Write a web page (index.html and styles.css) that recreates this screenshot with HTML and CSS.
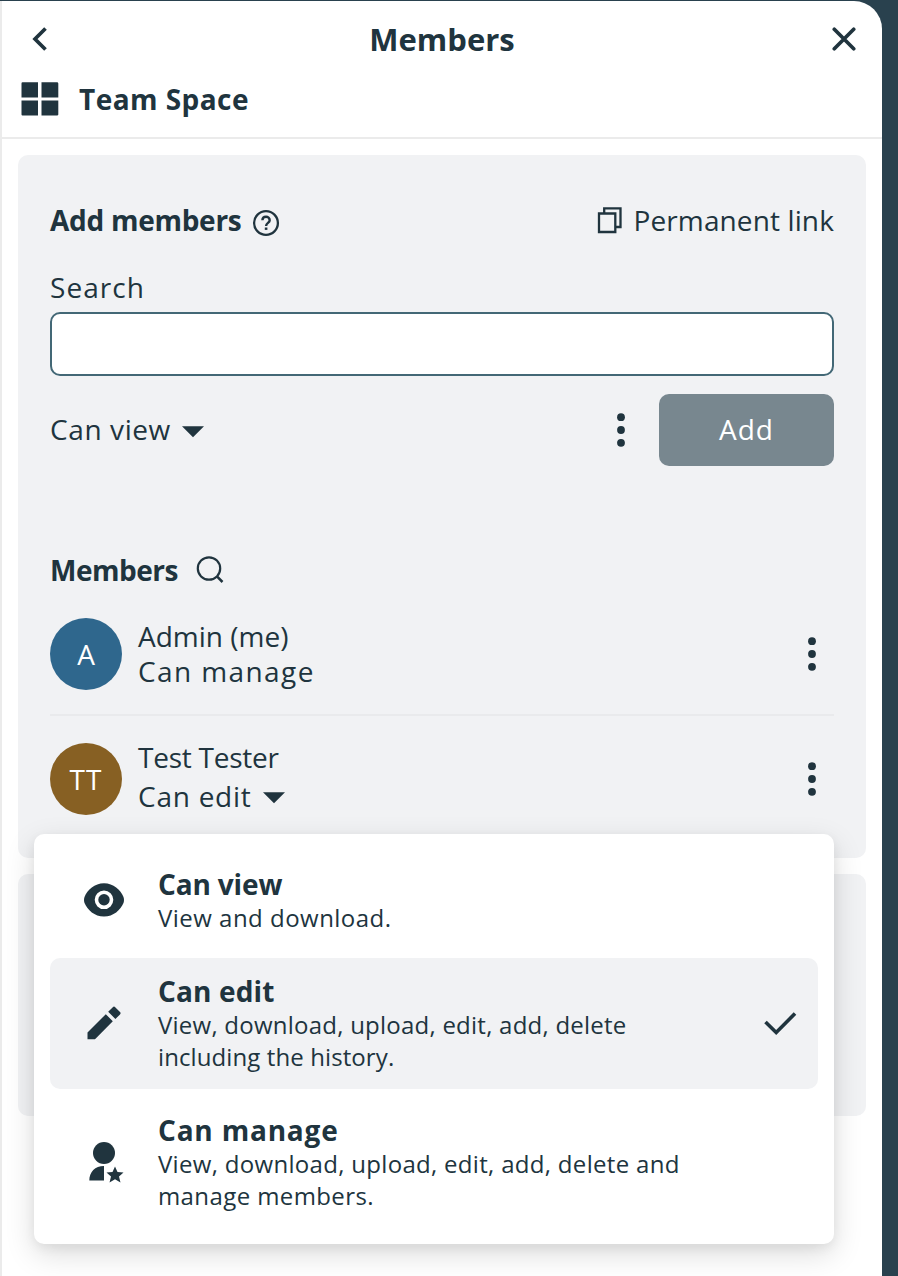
FILE: index.html
```html
<!DOCTYPE html>
<html lang="en">
<head>
<meta charset="utf-8">
<title>Members</title>
<link rel="stylesheet" href="styles.css">
</head>
<body>
<svg class="sprite" aria-hidden="true">
  <symbol id="dots" viewBox="0 0 8 34"><circle cx="4" cy="4.2" r="3.9"/><circle cx="4" cy="17" r="3.9"/><circle cx="4" cy="29.8" r="3.9"/></symbol>
  <symbol id="caret" viewBox="0 0 22 12"><path d="M0 0.3H22L11 11.3Z"/></symbol>
</svg>
<main class="sidebar">
  <header class="top">
    <div class="titlebar">
      <button class="icon-btn"><svg width="18" height="26" viewBox="0 0 18 26"><path d="M14.500 2.500L4 13l10.500 10.500" fill="none" stroke="currentColor" stroke-width="3.700"/></svg></button>
      <h1 class="title">Members</h1>
      <button class="icon-btn"><svg width="24" height="24" viewBox="0 0 24 24"><path d="M2.300 2.300L21.700 21.700M21.700 2.300L2.300 21.700" fill="none" stroke="currentColor" stroke-width="3.700" stroke-linecap="round"/></svg></button>
    </div>
    <div class="resource">
      <svg width="38" height="34" viewBox="0 0 38 34"><path d="M1.500 .3H17V15.500H.5V1.500Q.5 .3 1.500 .3ZM20.500 .3H36Q37.300 .3 37.300 1.500V15.500H20.500ZM.5 18.500H17V33.500H1.500Q.5 33.500 .5 32.500ZM20.500 18.500H37.300V32.500Q37.300 33.500 36 33.500H20.500Z"/></svg>
      <span class="b space">Team Space</span>
    </div>
  </header>
  <section class="card share">
    <div class="row head">
      <h2 class="b add-title">Add members</h2>
      <svg class="help" width="28" height="28" viewBox="0 0 28 28" fill="none" stroke="currentColor"><circle cx="14" cy="14" r="11.900" stroke-width="2.300"/><path d="M10.400 11.300C10.400 6.600 17.700 6.700 17.700 11.200C17.700 14 14.100 13.800 14.100 16.900" stroke-width="2.400"/><path d="M12.800 19.700h2.600" stroke-width="2.400"/></svg>
      <a class="link"><svg width="26" height="28" viewBox="0 0 26 28" fill="none" stroke="currentColor" stroke-width="2.300"><path d="M2 7.500H18.300V26H2Z"/><path d="M7.200 7V2.400H23.500V21H18.500"/></svg><span class="perm">Permanent link</span></a>
    </div>
    <label class="label" for="q">Search</label>
    <input class="field" id="q">
    <div class="row actions">
      <span class="can-view">Can view</span><svg class="caret" width="22" height="12"><use href="#caret"/></svg>
      <svg class="more" width="8" height="34"><use href="#dots"/></svg>
      <button class="add">Add</button>
    </div>
    <div class="row members">
      <h2 class="b mem-title">Members</h2>
      <svg width="28" height="28" viewBox="0 0 28 28" fill="none" stroke="currentColor" stroke-width="2.200"><circle cx="13" cy="12.500" r="11.200"/><path d="M20.700 20.200L26.500 26" stroke-width="2.500"/></svg>
    </div>
    <div class="row person first">
      <span class="avatar blue">A</span>
      <div class="who"><div class="n1">Admin (me)</div><div class="n2">Can manage</div></div>
      <svg class="more" width="8" height="34"><use href="#dots"/></svg>
    </div>
    <div class="row person">
      <span class="avatar brown">TT</span>
      <div class="who tall"><div class="n3">Test Tester</div><div class="row"><span class="n4">Can edit</span><svg class="caret" width="22" height="12"><use href="#caret"/></svg></div></div>
      <svg class="more" width="8" height="34"><use href="#dots"/></svg>
    </div>
  </section>
  <section class="card links"></section>
  <div class="menu">
    <div class="item">
      <svg class="ico" width="40" height="34" viewBox="0 0 40 34"><path fill-rule="evenodd" d="M20 .3C29.500 .3 36.500 7 39.500 14Q40.500 17 39.500 20C36.500 27 29.500 33.500 20 33.500S3.500 27 .5 20Q-.5 17 .5 14C3.500 7 10.500 .3 20 .3ZM20 7.500A9.300 9.300 0 1 0 20 26.100A9.300 9.300 0 1 0 20 7.500Z"/><circle cx="20" cy="16.800" r="5.700"/></svg>
      <div class="desc"><div class="b o1">Can view</div><p class="d1">View and download.</p></div>
    </div>
    <div class="item active">
      <svg class="ico" width="40" height="34" viewBox="0 0 40 34"><path d="M3.500 26.500L21.800 8.200L28.800 15.200L11 33.300H3.500ZM24.200 5.800L28.800 1.200Q30 0 31.200 1.200L36 6Q37.200 7.200 36 8.400L31.400 13Z"/></svg>
      <div class="desc"><div class="b o2">Can edit</div><p class="d2">View, download, upload, edit, add, delete</p><p class="d3">including the history.</p></div>
      <svg class="check" width="34" height="26" viewBox="0 0 34 26"><path d="M2.500 12L13.200 22.500L32 3.500" fill="none" stroke="currentColor" stroke-width="3.600"/></svg>
    </div>
    <div class="item">
      <svg class="ico" width="40" height="42" viewBox="0 0 40 42"><circle cx="20" cy="12" r="11"/><path d="M20 25V39.500H5.300C5.300 31 11 25 20 25ZM31 25.500L33.500 31L39.500 31.500L35 35.400L36.500 41.500L31 38.300L25.500 41.500L27 35.400L22.500 31.500L28.500 31Z"/></svg>
      <div class="desc"><div class="b o3">Can manage</div><p class="d4">View, download, upload, edit, add, delete and</p><p class="d5">manage members.</p></div>
    </div>
  </div>
</main>
</body>
</html>
```

FILE: styles.css
```css
* { box-sizing: border-box; }
body { margin: 0; padding-top: 1px; width: 898px; height: 1276px; overflow: hidden; background: #29414e; font: 28px/36px "Open Sans", sans-serif; color: #20343e; }
h1, h2, p { margin: 0; font-size: inherit; }
button { border: 0; padding: 0; background: none; font: inherit; color: inherit; display: flex; align-items: center; justify-content: center; }
svg { display: block; flex: none; fill: currentColor; }
svg[fill="none"] { fill: none; }
span, h1, h2, p, .label { white-space: nowrap; }
.sprite { position: absolute; width: 0; height: 0; }
.sidebar { position: relative; width: 882px; height: 1275px; background: #fff; border-left: 2px solid #ebebeb; border-top-right-radius: 28px; }
.top { height: 138px; border-bottom: 2px solid #ebebeb; }
.titlebar { display: flex; align-items: center; justify-content: space-between; height: 76px; padding: 0 26px; }
.titlebar .icon-btn { width: 24px; }
.title { font-size: 31px; font-weight: 700; line-height: 40px; }
.resource { display: flex; align-items: center; gap: 20px; height: 44px; padding-left: 19px; }
.b { font-weight: 700; }
.card { margin: 16px 16px 0; background: #f1f2f4; border-radius: 10px; }
.share { height: 703px; padding: 47px 32px 0; }
.links { height: 242px; }
.row { display: flex; align-items: center; }
.head { height: 36px; }
.help { margin: 6px 0 0 10px; }
.link { display: flex; align-items: center; gap: 10px; margin-left: auto; }
.label { display: block; margin-top: 31px; height: 43px; }
.field { display: block; width: 100%; height: 64px; border: 2px solid #436876; border-radius: 10px; background: #fff; outline: 0; }
.actions { height: 72px; margin-top: 18px; }
.caret { margin: 3px 0 0 11px; }
.can-view, .add { padding-bottom: 2px; }
.more { margin-left: auto; }
.add { width: 175px; height: 72px; margin-left: 34px; border-radius: 10px; background: #78878f; color: #fff; }
.members { height: 36px; margin-top: 86px; gap: 18px; }
.person { height: 126px; padding-right: 18px; }
.first { height: 128px; padding: 6px 0 0; padding-right: 18px; border-bottom: 2px solid #e9eaec; }
.avatar { display: flex; align-items: center; justify-content: center; width: 72px; height: 72px; margin-right: 16px; border-radius: 50%; color: #fff; font-size: 28px; font-weight: 500; }
.blue { background: #2f678d; }
.brown { background: #876023; letter-spacing: 1px; }
.who { line-height: 35px; }
.tall { line-height: 39px; padding-bottom: 4px; }
.menu { position: absolute; left: 32px; top: 833px; width: 800px; height: 410px; padding: 17px 16px 15px; display: flex; flex-direction: column; gap: 8px; background: #fff; border-radius: 10px; box-shadow: 0 10px 30px rgba(0,0,0,.14), 0 4px 12px rgba(0,0,0,.06); }
.item { display: flex; align-items: center; padding: 16px 20px 16px 34px; border-radius: 10px; }
.active { background: #f1f2f4; }
.desc { margin-left: 34px; line-height: 35px; }
.desc p { font-size: 24px; line-height: 32px; }
.ico { margin-top: -2px; }
.check { margin: -2px 1px 0 auto; }

/* Tracking */
.space { letter-spacing: .45px; }
.add-title { letter-spacing: -.27px; }
.perm { letter-spacing: .12px; }
.label { letter-spacing: 1.05px; }
.can-view { letter-spacing: .6px; }
.add { letter-spacing: 1px; }
.mem-title { letter-spacing: -.5px; }
.n2 { letter-spacing: 1.4px; }
.n3 { letter-spacing: -.25px; }
.n4 { letter-spacing: .75px; }
.o1 { letter-spacing: -.15px; }
.o2 { letter-spacing: .15px; }
.o3 { letter-spacing: .8px; }
.d1 { letter-spacing: .48px; }
.d2 { letter-spacing: .24px; }
.d3 { letter-spacing: .1px; }
.d4 { letter-spacing: .31px; }
.d5 { letter-spacing: .4px; }
```
